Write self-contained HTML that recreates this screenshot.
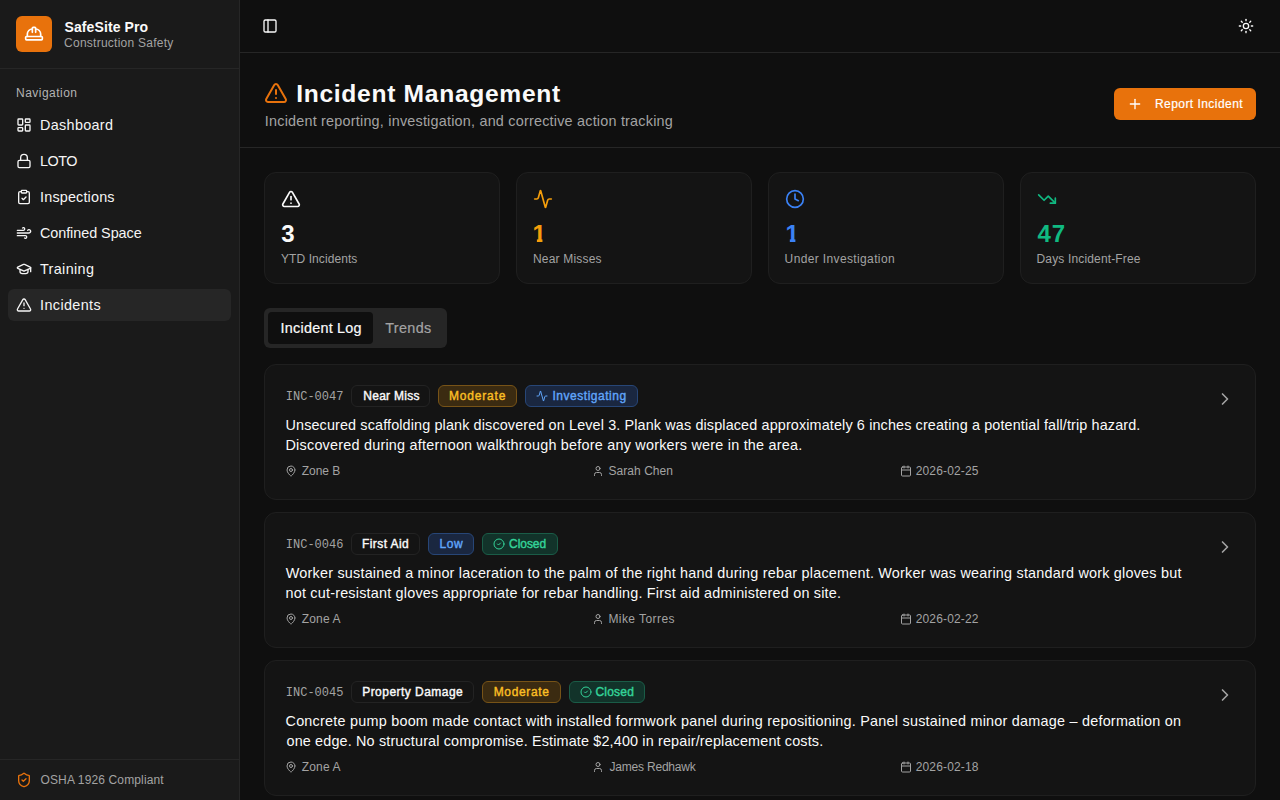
<!DOCTYPE html>
<html lang="en">
<head>
<meta charset="utf-8">
<title>SafeSite Pro – Incident Management</title>
<style>
*{box-sizing:border-box;margin:0;padding:0}
html,body{width:1280px;height:800px;overflow:hidden;background:#0f0f0f;color:#fafafa;
  font-family:"Liberation Sans",sans-serif;font-size:14px}
body{position:relative}
svg{display:block;position:absolute;fill:none;stroke:currentColor;stroke-width:2;stroke-linecap:round;stroke-linejoin:round}
.t{position:absolute;display:block;white-space:nowrap;line-height:1.25;font-weight:400;text-decoration:none}
.bx{position:absolute;display:block}
ul{list-style:none}
button{font:inherit;border:0;cursor:pointer}
#sb{left:0;top:0;width:240px;height:800px;background:#1a1a1a;border-right:1px solid #262626}
#sbh{left:0;top:0;width:239px;height:69px;border-bottom:1px solid #262626}
#sbf{left:0;top:759px;width:239px;height:41px;border-top:1px solid #262626}
#logo{left:16px;top:16px;width:36px;height:36px;border-radius:6px;background:#e8720c;color:#fff}
#navon{left:8px;top:289px;width:223px;height:32px;border-radius:6px;background:#262626}
#topb{left:240px;top:0;width:1040px;height:53px;border-bottom:1px solid #262626}
#ph{left:240px;top:53px;width:1040px;height:95px;border-bottom:1px solid #262626}
#btn{left:874px;top:35px;width:142px;height:32px;border-radius:6px;background:#e8720c;color:#fff}
.st{top:172px;width:236px;height:112px;border:1px solid #1f1f1f;border-radius:12px;background:#141414}
#tabs{left:264px;top:308px;width:183px;height:40px;border-radius:6px;background:#262626}
#tabon{left:4px;top:4px;width:105px;height:32px;border-radius:4px;background:#0f0f0f}
#taboff{left:109px;top:4px;width:70px;height:32px;border-radius:4px}
.ic{left:264px;width:992px;height:136px;border:1px solid #1f1f1f;border-radius:12px;background:#141414}
.bd{top:20px;height:22px;border-radius:6px;border:1px solid #232323}
.bd.amb{background:#3b2b11;border-color:#775317}
.bd.blu{background:#1a2740;border-color:#274677}
.bd.grn{background:#12332a;border-color:#1a5c47}
.mi{color:#a3a3a3}
</style>
</head>
<body>
<aside class="bx" id="sb">
<div class="bx" id="sbh"><div class="bx" id="logo"><svg style="left:8px;top:8px;width:20px;height:20px;" viewBox="0 0 24 24"><path d="M10 10V5a1 1 0 0 1 1-1h2a1 1 0 0 1 1 1v5"/><path d="M14 6a6 6 0 0 1 6 6v3"/><path d="M4 15v-3a6 6 0 0 1 6-6"/><rect x="2" y="15" width="20" height="4" rx="1"/></svg></div><span class="t" id="brand" style="left:64.50px;top:19.00px;font-size:14px;color:#fafafa;font-weight:700;letter-spacing:0.109px;">SafeSite Pro</span><span class="t" id="brand2" style="left:64.10px;top:36.00px;font-size:12px;color:#a3a3a3;letter-spacing:0.244px;">Construction Safety</span></div>
<nav><h2 class="t" id="navl" style="left:16.00px;top:86.00px;font-size:12px;color:#b3b3b3;letter-spacing:0.477px;">Navigation</h2>
<div class="bx" id="navon"></div>
<ul>
<li><svg style="left:16px;top:117px;width:16px;height:16px;color:#f5f5f5;" viewBox="0 0 24 24"><rect width="7" height="9" x="3" y="3" rx="1"/><rect width="7" height="5" x="14" y="3" rx="1"/><rect width="7" height="9" x="14" y="12" rx="1"/><rect width="7" height="5" x="3" y="16" rx="1"/></svg><a class="t" id="nav0" style="left:40.10px;top:115.60px;font-size:14.4px;color:#f5f5f5;letter-spacing:0.300px;">Dashboard</a></li>
<li><svg style="left:16px;top:153px;width:16px;height:16px;color:#f5f5f5;" viewBox="0 0 24 24"><rect width="18" height="11" x="3" y="11" rx="2" ry="2"/><path d="M7 11V7a5 5 0 0 1 10 0v4"/></svg><a class="t" id="nav1" style="left:40.10px;top:151.60px;font-size:14.4px;color:#f5f5f5;letter-spacing:-0.533px;">LOTO</a></li>
<li><svg style="left:16px;top:189px;width:16px;height:16px;color:#f5f5f5;" viewBox="0 0 24 24"><rect width="8" height="4" x="8" y="2" rx="1" ry="1"/><path d="M16 4h2a2 2 0 0 1 2 2v14a2 2 0 0 1-2 2H6a2 2 0 0 1-2-2V6a2 2 0 0 1 2-2h2"/><path d="m9 14 2 2 4-4"/></svg><a class="t" id="nav2" style="left:40.10px;top:187.60px;font-size:14.4px;color:#f5f5f5;letter-spacing:0.160px;">Inspections</a></li>
<li><svg style="left:16px;top:225px;width:16px;height:16px;color:#f5f5f5;" viewBox="0 0 24 24"><path d="M12.8 19.6A2 2 0 1 0 14 16H2"/><path d="M17.5 8a2.5 2.5 0 1 1 2 4H2"/><path d="M9.8 4.4A2 2 0 1 1 11 8H2"/></svg><a class="t" id="nav3" style="left:39.90px;top:223.60px;font-size:14.4px;color:#f5f5f5;letter-spacing:-0.046px;">Confined Space</a></li>
<li><svg style="left:16px;top:261px;width:16px;height:16px;color:#f5f5f5;" viewBox="0 0 24 24"><path d="M21.42 10.922a1 1 0 0 0-.019-1.838L12.83 5.18a2 2 0 0 0-1.66 0L2.6 9.08a1 1 0 0 0 0 1.832l8.57 3.908a2 2 0 0 0 1.66 0z"/><path d="M22 10v6"/><path d="M6 12.5V16a6 3 0 0 0 12 0v-3.5"/></svg><a class="t" id="nav4" style="left:39.90px;top:259.60px;font-size:14.4px;color:#f5f5f5;letter-spacing:0.372px;">Training</a></li>
<li><svg style="left:16px;top:297px;width:16px;height:16px;color:#f5f5f5;" viewBox="0 0 24 24"><path d="m21.73 18-8-14a2 2 0 0 0-3.48 0l-8 14A2 2 0 0 0 4 21h16a2 2 0 0 0 1.73-3"/><path d="M12 9v4"/><path d="M12 17h.01"/></svg><a class="t" id="nav5" style="left:40.10px;top:295.60px;font-size:14.4px;color:#f5f5f5;letter-spacing:0.375px;">Incidents</a></li>
</ul></nav>
<footer class="bx" id="sbf"><svg style="left:16px;top:12px;width:16px;height:16px;color:#e8720c;" viewBox="0 0 24 24"><path d="M20 13c0 5-3.5 7.5-7.66 8.950a1 1 0 0 1-.67-.01C7.5 20.5 4 18 4 13V6a1 1 0 0 1 1-1c2 0 4.5-1.200 6.240-2.720a1.170 1.170 0 0 1 1.520 0C14.510 3.810 17 5 19 5a1 1 0 0 1 1 1z"/><path d="m9 12 2 2 4-4"/></svg><span class="t" id="foot" style="left:40.50px;top:13.00px;font-size:12px;color:#a3a3a3;letter-spacing:0.133px;">OSHA 1926 Compliant</span></footer>
</aside>
<div class="bx" id="topb"><svg style="left:22px;top:18px;width:16px;height:16px;" viewBox="0 0 24 24"><rect width="18" height="18" x="3" y="3" rx="2"/><path d="M9 3v18"/></svg><svg style="left:998px;top:18px;width:16px;height:16px;" viewBox="0 0 24 24"><circle cx="12" cy="12" r="4"/><path d="M12 2v2"/><path d="M12 20v2"/><path d="m4.93 4.93 1.41 1.41"/><path d="m17.66 17.66 1.41 1.41"/><path d="M2 12h2"/><path d="M20 12h2"/><path d="m6.34 17.66-1.41 1.41"/><path d="m19.07 4.930-1.410 1.410"/></svg></div>
<main>
<header class="bx" id="ph"><svg style="left:24px;top:28px;width:24px;height:24px;color:#e8720c;" viewBox="0 0 24 24"><path d="m21.73 18-8-14a2 2 0 0 0-3.48 0l-8 14A2 2 0 0 0 4 21h16a2 2 0 0 0 1.73-3"/><path d="M12 9v4"/><path d="M12 17h.01"/></svg><h1 class="t" id="h1" style="left:56.20px;top:26.40px;font-size:24.6px;color:#fafafa;font-weight:700;letter-spacing:0.700px;">Incident Management</h1><p class="t" id="sub" style="left:24.80px;top:58.60px;font-size:14.4px;color:#a3a3a3;letter-spacing:0.213px;">Incident reporting, investigation, and corrective action tracking</p>
<button class="bx" id="btn"><svg style="left:13px;top:8px;width:16px;height:16px;" viewBox="0 0 24 24"><path d="M5 12h14"/><path d="M12 5v14"/></svg><span class="t" id="btnt" style="left:40.90px;top:9.00px;font-size:12px;color:#ffffff;-webkit-text-stroke:0.2px currentColor;letter-spacing:0.458px;">Report Incident</span></button></header>
<section>
<div class="bx st" style="left:264px"><svg style="left:16px;top:16px;width:20px;height:20px;color:#fafafa;" viewBox="0 0 24 24"><path d="m21.73 18-8-14a2 2 0 0 0-3.48 0l-8 14A2 2 0 0 0 4 21h16a2 2 0 0 0 1.73-3"/><path d="M12 9v4"/><path d="M12 17h.01"/></svg><strong class="t" id="s0n" style="left:16.20px;top:46.00px;font-size:24px;color:#fafafa;font-weight:700;">3</strong><span class="t" id="s0l" style="left:16.00px;top:79.00px;font-size:12px;color:#a3a3a3;letter-spacing:0.084px;">YTD Incidents</span></div>
<div class="bx st" style="left:516px"><svg style="left:16px;top:16px;width:20px;height:20px;color:#f59e0b;" viewBox="0 0 24 24"><path d="M22 12h-2.480a2 2 0 0 0-1.930 1.460l-2.350 8.360a.25.25 0 0 1-.48 0L9.240 2.180a.25.25 0 0 0-.48 0l-2.350 8.360A2 2 0 0 1 4.490 12H2"/></svg><strong class="t" id="s1n" style="left:15.50px;top:46.00px;font-size:24px;color:#f59e0b;font-weight:700;clip-path:polygon(0 0,100% 0,100% 19.7px,10px 19.7px,10px 100%,4.4px 100%,4.4px 19.7px,0 19.7px);">1</strong><span class="t" id="s1l" style="left:15.90px;top:79.00px;font-size:12px;color:#a3a3a3;letter-spacing:0.200px;">Near Misses</span></div>
<div class="bx st" style="left:768px"><svg style="left:16px;top:16px;width:20px;height:20px;color:#3b82f6;" viewBox="0 0 24 24"><circle cx="12" cy="12" r="10"/><polyline points="12 6 12 12 16 14"/></svg><strong class="t" id="s2n" style="left:16.40px;top:46.00px;font-size:24px;color:#3b82f6;font-weight:700;clip-path:polygon(0 0,100% 0,100% 19.7px,10px 19.7px,10px 100%,4.4px 100%,4.4px 19.7px,0 19.7px);">1</strong><span class="t" id="s2l" style="left:15.60px;top:79.00px;font-size:12px;color:#a3a3a3;letter-spacing:0.367px;">Under Investigation</span></div>
<div class="bx st" style="left:1020px"><svg style="left:16px;top:16px;width:20px;height:20px;color:#10b981;" viewBox="0 0 24 24"><polyline points="22 17 13.5 8.5 8.5 13.5 2 7"/><polyline points="16 17 22 17 22 11"/></svg><strong class="t" id="s3n" style="left:16.50px;top:46.00px;font-size:24px;color:#10b981;font-weight:700;letter-spacing:0.800px;">47</strong><span class="t" id="s3l" style="left:15.50px;top:79.00px;font-size:12px;color:#a3a3a3;letter-spacing:0.153px;">Days Incident-Free</span></div>
</section>
<div class="bx" id="tabs"><div class="bx" id="tabon"><span class="t" id="tab0" style="left:12.60px;top:6.60px;font-size:14.4px;color:#fafafa;-webkit-text-stroke:0.2px currentColor;letter-spacing:0.236px;">Incident Log</span></div><div class="bx" id="taboff"><span class="t" id="tab1" style="left:12.20px;top:6.60px;font-size:14.4px;color:#a3a3a3;-webkit-text-stroke:0.2px currentColor;letter-spacing:0.360px;">Trends</span></div></div>
<section>
<article class="bx ic" style="top:364px">
<span class="t" id="c0id" style="left:20.80px;top:25.00px;font-size:12px;color:#a3a3a3;font-family:'Liberation Mono',monospace;">INC-0047</span>
<div class="bx bd" style="left:86px;width:79px"><span class="t" id="c0b0" style="left:11.20px;top:3.00px;font-size:12px;color:#fafafa;-webkit-text-stroke:0.4px currentColor;letter-spacing:0.301px;">Near Miss</span></div>
<div class="bx bd amb" style="left:173px;width:79px"><span class="t" id="c0b1" style="left:10.00px;top:3.00px;font-size:12px;color:#fbbf24;-webkit-text-stroke:0.4px currentColor;letter-spacing:0.815px;">Moderate</span></div>
<div class="bx bd blu" style="left:260px;width:113px"><svg style="left:10px;top:4px;width:12px;height:12px;color:#60a5fa;" viewBox="0 0 24 24"><path d="M22 12h-2.480a2 2 0 0 0-1.930 1.460l-2.350 8.360a.25.25 0 0 1-.48 0L9.240 2.180a.25.25 0 0 0-.48 0l-2.350 8.360A2 2 0 0 1 4.490 12H2"/></svg><span class="t" id="c0b2" style="left:26.50px;top:3.00px;font-size:12px;color:#60a5fa;-webkit-text-stroke:0.4px currentColor;letter-spacing:0.525px;">Investigating</span></div>
<p><span class="t" id="c0l1" style="left:20.50px;top:50.60px;font-size:14.4px;color:#fafafa;letter-spacing:0.128px;">Unsecured scaffolding plank discovered on Level 3. Plank was displaced approximately 6 inches creating a potential fall/trip hazard.</span><span class="t" id="c0l2" style="left:20.50px;top:70.60px;font-size:14.4px;color:#fafafa;letter-spacing:0.224px;">Discovered during afternoon walkthrough before any workers were in the area.</span></p>
<svg class="mi" style="left:20px;top:100px;width:12px;height:12px;" viewBox="0 0 24 24"><path d="M20 10c0 4.993-5.539 10.193-7.399 11.799a1 1 0 0 1-1.202 0C9.539 20.193 4 14.993 4 10a8 8 0 0 1 16 0"/><circle cx="12" cy="10" r="3"/></svg><span class="t" id="c0z" style="left:36.80px;top:99.00px;font-size:12px;color:#a3a3a3;letter-spacing:-0.040px;">Zone B</span>
<svg class="mi" style="left:327.3px;top:100px;width:12px;height:12px;" viewBox="0 0 24 24"><path d="M19 21v-2a4 4 0 0 0-4-4H9a4 4 0 0 0-4 4v2"/><circle cx="12" cy="7" r="4"/></svg><span class="t" id="c0w" style="left:343.40px;top:99.00px;font-size:12px;color:#a3a3a3;letter-spacing:0.066px;">Sarah Chen</span>
<svg class="mi" style="left:634.7px;top:100px;width:12px;height:12px;" viewBox="0 0 24 24"><path d="M8 2v4"/><path d="M16 2v4"/><rect width="18" height="18" x="3" y="4" rx="2"/><path d="M3 10h18"/></svg><time class="t" id="c0d" style="left:650.70px;top:99.00px;font-size:12px;color:#a3a3a3;letter-spacing:0.156px;">2026-02-25</time>
<svg style="left:950px;top:24px;width:20px;height:20px;color:#a3a3a3;" viewBox="0 0 24 24"><path d="m9 18 6-6-6-6"/></svg>
</article>
<article class="bx ic" style="top:512px">
<span class="t" id="c1id" style="left:20.80px;top:25.00px;font-size:12px;color:#a3a3a3;font-family:'Liberation Mono',monospace;">INC-0046</span>
<div class="bx bd" style="left:86px;width:69px"><span class="t" id="c1b0" style="left:10.00px;top:3.00px;font-size:12px;color:#fafafa;-webkit-text-stroke:0.4px currentColor;letter-spacing:0.425px;">First Aid</span></div>
<div class="bx bd blu" style="left:163px;width:46px"><span class="t" id="c1b1" style="left:10.40px;top:3.00px;font-size:12px;color:#60a5fa;-webkit-text-stroke:0.4px currentColor;letter-spacing:0.600px;">Low</span></div>
<div class="bx bd grn" style="left:217px;width:76px"><svg style="left:10px;top:4px;width:12px;height:12px;color:#34d399;" viewBox="0 0 24 24"><circle cx="12" cy="12" r="10"/><path d="m9 12 2 2 4-4"/></svg><span class="t" id="c1b2" style="left:26.00px;top:3.00px;font-size:12px;color:#34d399;-webkit-text-stroke:0.4px currentColor;letter-spacing:-0.040px;">Closed</span></div>
<p><span class="t" id="c1l1" style="left:20.80px;top:50.60px;font-size:14.4px;color:#fafafa;letter-spacing:0.214px;">Worker sustained a minor laceration to the palm of the right hand during rebar placement. Worker was wearing standard work gloves but</span><span class="t" id="c1l2" style="left:20.50px;top:70.60px;font-size:14.4px;color:#fafafa;letter-spacing:0.207px;">not cut-resistant gloves appropriate for rebar handling. First aid administered on site.</span></p>
<svg class="mi" style="left:20px;top:100px;width:12px;height:12px;" viewBox="0 0 24 24"><path d="M20 10c0 4.993-5.539 10.193-7.399 11.799a1 1 0 0 1-1.202 0C9.539 20.193 4 14.993 4 10a8 8 0 0 1 16 0"/><circle cx="12" cy="10" r="3"/></svg><span class="t" id="c1z" style="left:36.80px;top:99.00px;font-size:12px;color:#a3a3a3;letter-spacing:0.160px;">Zone A</span>
<svg class="mi" style="left:327.3px;top:100px;width:12px;height:12px;" viewBox="0 0 24 24"><path d="M19 21v-2a4 4 0 0 0-4-4H9a4 4 0 0 0-4 4v2"/><circle cx="12" cy="7" r="4"/></svg><span class="t" id="c1w" style="left:343.40px;top:99.00px;font-size:12px;color:#a3a3a3;letter-spacing:0.430px;">Mike Torres</span>
<svg class="mi" style="left:634.7px;top:100px;width:12px;height:12px;" viewBox="0 0 24 24"><path d="M8 2v4"/><path d="M16 2v4"/><rect width="18" height="18" x="3" y="4" rx="2"/><path d="M3 10h18"/></svg><time class="t" id="c1d" style="left:650.70px;top:99.00px;font-size:12px;color:#a3a3a3;letter-spacing:0.156px;">2026-02-22</time>
<svg style="left:950px;top:24px;width:20px;height:20px;color:#a3a3a3;" viewBox="0 0 24 24"><path d="m9 18 6-6-6-6"/></svg>
</article>
<article class="bx ic" style="top:660px">
<span class="t" id="c2id" style="left:20.80px;top:25.00px;font-size:12px;color:#a3a3a3;font-family:'Liberation Mono',monospace;">INC-0045</span>
<div class="bx bd" style="left:86px;width:123px"><span class="t" id="c2b0" style="left:10.20px;top:3.00px;font-size:12px;color:#fafafa;-webkit-text-stroke:0.4px currentColor;letter-spacing:0.468px;">Property Damage</span></div>
<div class="bx bd amb" style="left:217px;width:79px"><span class="t" id="c2b1" style="left:10.70px;top:3.00px;font-size:12px;color:#fbbf24;-webkit-text-stroke:0.4px currentColor;letter-spacing:0.657px;">Moderate</span></div>
<div class="bx bd grn" style="left:304px;width:76px"><svg style="left:10px;top:4px;width:12px;height:12px;color:#34d399;" viewBox="0 0 24 24"><circle cx="12" cy="12" r="10"/><path d="m9 12 2 2 4-4"/></svg><span class="t" id="c2b2" style="left:25.40px;top:3.00px;font-size:12px;color:#34d399;-webkit-text-stroke:0.4px currentColor;letter-spacing:0.240px;">Closed</span></div>
<p><span class="t" id="c2l1" style="left:20.50px;top:50.60px;font-size:14.4px;color:#fafafa;letter-spacing:0.234px;">Concrete pump boom made contact with installed formwork panel during repositioning. Panel sustained minor damage – deformation on</span><span class="t" id="c2l2" style="left:21.50px;top:70.60px;font-size:14.4px;color:#fafafa;letter-spacing:0.152px;">one edge. No structural compromise. Estimate $2,400 in repair/replacement costs.</span></p>
<svg class="mi" style="left:20px;top:100px;width:12px;height:12px;" viewBox="0 0 24 24"><path d="M20 10c0 4.993-5.539 10.193-7.399 11.799a1 1 0 0 1-1.202 0C9.539 20.193 4 14.993 4 10a8 8 0 0 1 16 0"/><circle cx="12" cy="10" r="3"/></svg><span class="t" id="c2z" style="left:36.80px;top:99.00px;font-size:12px;color:#a3a3a3;letter-spacing:0.160px;">Zone A</span>
<svg class="mi" style="left:327.3px;top:100px;width:12px;height:12px;" viewBox="0 0 24 24"><path d="M19 21v-2a4 4 0 0 0-4-4H9a4 4 0 0 0-4 4v2"/><circle cx="12" cy="7" r="4"/></svg><span class="t" id="c2w" style="left:344.40px;top:99.00px;font-size:12px;color:#a3a3a3;letter-spacing:-0.191px;">James Redhawk</span>
<svg class="mi" style="left:634.7px;top:100px;width:12px;height:12px;" viewBox="0 0 24 24"><path d="M8 2v4"/><path d="M16 2v4"/><rect width="18" height="18" x="3" y="4" rx="2"/><path d="M3 10h18"/></svg><time class="t" id="c2d" style="left:650.70px;top:99.00px;font-size:12px;color:#a3a3a3;letter-spacing:0.156px;">2026-02-18</time>
<svg style="left:950px;top:24px;width:20px;height:20px;color:#a3a3a3;" viewBox="0 0 24 24"><path d="m9 18 6-6-6-6"/></svg>
</article>
</section>
</main>
</body>
</html>
